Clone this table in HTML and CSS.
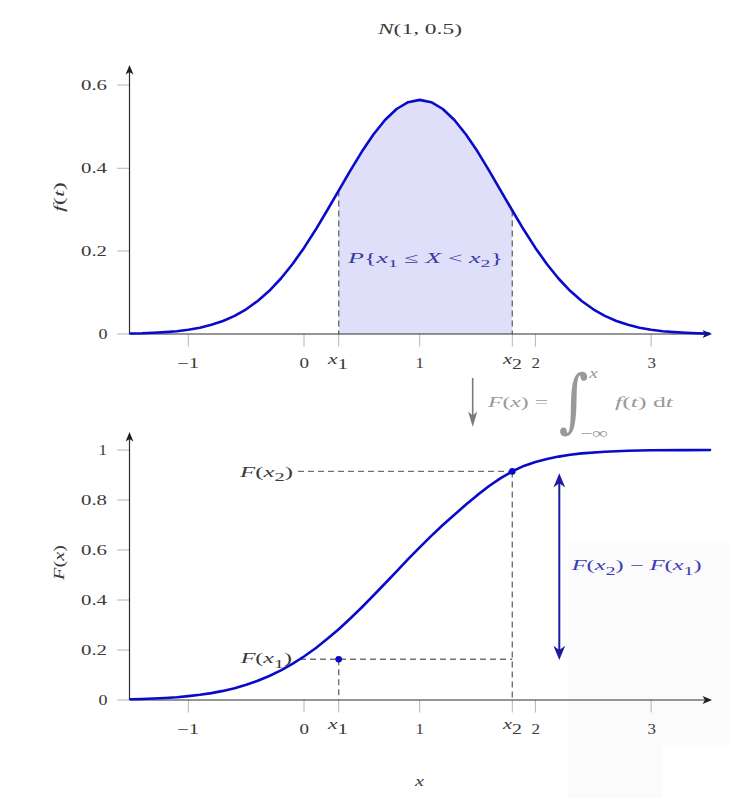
FILE: index.html
```html
<!DOCTYPE html>
<html lang="en">
<head>
<meta charset="utf-8">
<title>N(1, 0.5)</title>
<link rel="stylesheet" href="styles.css">
</head>
<body>
<svg class="chart" width="729" height="798" viewBox="0 0 729 798" xmlns="http://www.w3.org/2000/svg">
  <!-- faint background watermark -->
  <rect class="wm" x="568" y="543" width="161" height="255"/>
  <rect class="wm-in" x="662" y="745" width="67" height="53"/>

  <!-- title -->
  <text class="lbl" x="378" y="33.5" textLength="84" lengthAdjust="spacingAndGlyphs"><tspan class="it">N</tspan>(1, 0.5)</text>

  <!-- ============ TOP PLOT (density) ============ -->
  <polygon class="shade" points="338.7,334 338.7,190.6 350.3,170.6 361.9,151.6 373.4,134.5 385.0,120.0 396.6,109.0 408.1,102.2 419.7,99.9 431.3,102.2 442.8,109.0 454.4,120.0 466.0,134.5 477.6,151.6 489.1,170.6 500.7,190.6 512.3,210.5 512.3,334"/>

  <g class="tick">
    <line x1="117" y1="85" x2="129.5" y2="85"/>
    <line x1="117" y1="168.3" x2="129.5" y2="168.3"/>
    <line x1="117" y1="251" x2="129.5" y2="251"/>
    <line x1="117" y1="334" x2="129.5" y2="334"/>
    <line x1="188.3" y1="334" x2="188.3" y2="346.5"/>
    <line x1="304" y1="334" x2="304" y2="346.5"/>
    <line x1="338.7" y1="334" x2="338.7" y2="346.5"/>
    <line x1="419.7" y1="334" x2="419.7" y2="346.5"/>
    <line x1="512.3" y1="334" x2="512.3" y2="346.5"/>
    <line x1="535.4" y1="334" x2="535.4" y2="346.5"/>
    <line x1="651.1" y1="334" x2="651.1" y2="346.5"/>
  </g>

  <line class="dash" x1="338.7" y1="190.6" x2="338.7" y2="334"/>
  <line class="dash" x1="512.3" y1="210.5" x2="512.3" y2="334"/>

  <line class="axis" x1="129.5" y1="334" x2="129.5" y2="68"/>
  <path class="head" d="M129.5,65 L133.4,74.5 L129.5,72 L125.6,74.5 Z"/>
  <line class="axis" x1="129.5" y1="334" x2="709" y2="334"/>
  <path class="head" d="M712,334 L702.5,330.1 L705,334 L702.5,337.9 Z"/>

  <polyline class="curve" points="130.45,333.5 142.0,333.3 153.6,332.8 165.2,332.1 176.7,331.2 188.3,329.7 199.9,327.7 211.4,324.8 223.0,321.0 234.6,315.9 246.2,309.3 257.7,301.0 269.3,290.8 280.9,278.5 292.4,264.2 304.0,247.9 315.6,229.8 327.1,210.5 338.7,190.6 350.3,170.6 361.9,151.6 373.4,134.5 385.0,120.0 396.6,109.0 408.1,102.2 419.7,99.9 431.3,102.2 442.8,109.0 454.4,120.0 466.0,134.5 477.6,151.6 489.1,170.6 500.7,190.6 512.3,210.5 523.8,229.8 535.4,247.9 547.0,264.2 558.5,278.5 570.1,290.8 581.7,301.0 593.3,309.3 604.8,315.9 616.4,321.0 628.0,324.8 639.5,327.7 651.1,329.7 662.7,331.2 674.2,332.1 685.8,332.8 697.4,333.3 709.0,333.6"/>

  <text class="lbl" x="81" y="90" textLength="26" lengthAdjust="spacingAndGlyphs">0.6</text>
  <text class="lbl" x="81" y="173.3" textLength="26" lengthAdjust="spacingAndGlyphs">0.4</text>
  <text class="lbl" x="81" y="256" textLength="26" lengthAdjust="spacingAndGlyphs">0.2</text>
  <text class="lbl" x="98.5" y="339" textLength="9" lengthAdjust="spacingAndGlyphs">0</text>

  <text class="lbl" x="177" y="368" textLength="22" lengthAdjust="spacingAndGlyphs">−1</text>
  <text class="lbl" x="299.5" y="368" textLength="9.5" lengthAdjust="spacingAndGlyphs">0</text>
  <text class="lbl" x="328" y="363.5" textLength="20" lengthAdjust="spacingAndGlyphs"><tspan class="it">x</tspan><tspan class="subb" dy="5.5">1</tspan></text>
  <text class="lbl" x="415.5" y="368" textLength="8.5" lengthAdjust="spacingAndGlyphs">1</text>
  <text class="lbl" x="503" y="363.5" textLength="19" lengthAdjust="spacingAndGlyphs"><tspan class="it">x</tspan><tspan class="subb" dy="5.5">2</tspan></text>
  <text class="lbl" x="531.5" y="368" textLength="8.5" lengthAdjust="spacingAndGlyphs">2</text>
  <text class="lbl" x="647.5" y="368" textLength="8.5" lengthAdjust="spacingAndGlyphs">3</text>

  <text class="lbl" transform="translate(64,212) rotate(-90)" x="0" y="0" textLength="30" lengthAdjust="spacingAndGlyphs"><tspan class="it">f</tspan>(<tspan class="it">t</tspan>)</text>

  <text class="lbl plab" x="348" y="263.3" textLength="155" lengthAdjust="spacingAndGlyphs"><tspan class="it">P</tspan>{<tspan class="it">x</tspan><tspan class="sub" dy="3.5">1</tspan><tspan dy="-3.5"> ≤ </tspan><tspan class="it">X</tspan> &lt; <tspan class="it">x</tspan><tspan class="sub" dy="3.5">2</tspan><tspan dy="-3.5">}</tspan></text>

  <!-- ============ CONNECTOR ============ -->
  <line class="garrow" x1="472.7" y1="378" x2="472.7" y2="418"/>
  <path class="ghead" d="M472.7,427 L477.2,411.5 L472.7,415.5 L468.2,411.5 Z"/>
  <text class="lbl gray" x="488" y="406.5" textLength="60" lengthAdjust="spacingAndGlyphs"><tspan class="it">F</tspan>(<tspan class="it">x</tspan>) =</text>
  <text class="gray integral" x="0" y="0" transform="translate(559,424) scale(0.95,1.15)">∫</text>
  <text class="lbl gray mid it" x="589" y="378" textLength="9" lengthAdjust="spacingAndGlyphs">x</text>
  <text class="lbl gray" x="580" y="438" textLength="28" lengthAdjust="spacingAndGlyphs">−∞</text>
  <text class="lbl gray" x="615" y="406.5" textLength="58" lengthAdjust="spacingAndGlyphs"><tspan class="it">f</tspan>(<tspan class="it">t</tspan>) d<tspan class="it">t</tspan></text>

  <!-- ============ BOTTOM PLOT (CDF) ============ -->
  <g class="tick">
    <line x1="117" y1="450" x2="129.5" y2="450"/>
    <line x1="117" y1="500" x2="129.5" y2="500"/>
    <line x1="117" y1="550" x2="129.5" y2="550"/>
    <line x1="117" y1="600" x2="129.5" y2="600"/>
    <line x1="117" y1="650" x2="129.5" y2="650"/>
    <line x1="117" y1="700" x2="129.5" y2="700"/>
    <line x1="188.3" y1="700" x2="188.3" y2="712.5"/>
    <line x1="304" y1="700" x2="304" y2="712.5"/>
    <line x1="338.7" y1="700" x2="338.7" y2="712.5"/>
    <line x1="419.7" y1="700" x2="419.7" y2="712.5"/>
    <line x1="512.3" y1="700" x2="512.3" y2="712.5"/>
    <line x1="535.4" y1="700" x2="535.4" y2="712.5"/>
    <line x1="651.1" y1="700" x2="651.1" y2="712.5"/>
  </g>

  <line class="dash" x1="298" y1="471.4" x2="512.3" y2="471.4"/>
  <line class="dash" x1="512.3" y1="471.4" x2="512.3" y2="700"/>
  <line class="dash" x1="300" y1="659.3" x2="512.3" y2="659.3"/>
  <line class="dash" x1="338.7" y1="659.3" x2="338.7" y2="700"/>

  <line class="axis" x1="129.5" y1="700" x2="129.5" y2="435"/>
  <path class="head" d="M129.5,432 L133.4,441.5 L129.5,439 L125.6,441.5 Z"/>
  <line class="axis" x1="129.5" y1="700" x2="709" y2="700"/>
  <path class="head" d="M712,700 L702.5,696.1 L705,700 L702.5,703.9 Z"/>

  <polyline class="curve" points="130.45,699.3 142.0,699.0 153.6,698.55 165.2,698.0 176.7,697.2 188.3,696.1 199.9,694.8 211.4,693.1 223.0,690.9 234.6,688.2 246.2,684.8 257.7,680.8 269.3,676.0 280.9,670.4 292.4,663.9 304,656.5 315.6,648.3 327.1,639.1 338.7,629.2 350.3,618.5 361.9,607.2 373.4,595.5 385.0,583.5 396.6,571.4 408.1,559.2 419.7,547.4 431.3,535.9 442.8,525.0 454.4,514.8 466.0,504.6 477.6,494.9 489.1,486.0 500.7,478.1 512.3,471.4 523.8,465.9 535.4,461.9 547.0,458.9 558.5,456.6 570.1,454.8 581.7,453.4 604.8,451.7 628.0,450.8 651.1,450.3 685.8,450.1 710,450"/>

  <circle class="dot" cx="338.7" cy="659.3" r="3.3"/>
  <circle class="dot" cx="512.3" cy="471.4" r="3.3"/>

  <line class="barrow" x1="559.3" y1="482" x2="559.3" y2="651"/>
  <path class="bhead" d="M559.3,473.3 L565.2,487.5 L559.3,483.2 L553.4,487.5 Z"/>
  <path class="bhead" d="M559.3,660 L565.2,645.8 L559.3,650.1 L553.4,645.8 Z"/>
  <text class="lbl blab" x="571.7" y="570" textLength="130" lengthAdjust="spacingAndGlyphs"><tspan class="it">F</tspan>(<tspan class="it">x</tspan><tspan class="sub2" dy="4.5">2</tspan><tspan dy="-4.5">) − </tspan><tspan class="it">F</tspan>(<tspan class="it">x</tspan><tspan class="sub2" dy="4.5">1</tspan><tspan dy="-4.5">)</tspan></text>

  <text class="lbl" x="240" y="476.5" textLength="53" lengthAdjust="spacingAndGlyphs"><tspan class="it">F</tspan>(<tspan class="it">x</tspan><tspan class="sub2" dy="4.5">2</tspan><tspan dy="-4.5">)</tspan></text>
  <text class="lbl" x="240.7" y="663.3" textLength="51.3" lengthAdjust="spacingAndGlyphs"><tspan class="it">F</tspan>(<tspan class="it">x</tspan><tspan class="sub2" dy="4.5">1</tspan><tspan dy="-4.5">)</tspan></text>

  <text class="lbl" x="98.5" y="455" textLength="8.5" lengthAdjust="spacingAndGlyphs">1</text>
  <text class="lbl" x="81" y="505" textLength="26" lengthAdjust="spacingAndGlyphs">0.8</text>
  <text class="lbl" x="81" y="555" textLength="26" lengthAdjust="spacingAndGlyphs">0.6</text>
  <text class="lbl" x="81" y="605" textLength="26" lengthAdjust="spacingAndGlyphs">0.4</text>
  <text class="lbl" x="81" y="655" textLength="26" lengthAdjust="spacingAndGlyphs">0.2</text>
  <text class="lbl" x="98.5" y="705" textLength="9" lengthAdjust="spacingAndGlyphs">0</text>

  <text class="lbl" x="177" y="733.5" textLength="22" lengthAdjust="spacingAndGlyphs">−1</text>
  <text class="lbl" x="299.5" y="733.5" textLength="9.5" lengthAdjust="spacingAndGlyphs">0</text>
  <text class="lbl" x="328" y="728.5" textLength="20" lengthAdjust="spacingAndGlyphs"><tspan class="it">x</tspan><tspan class="subb" dy="5.5">1</tspan></text>
  <text class="lbl" x="415.5" y="733.5" textLength="8.5" lengthAdjust="spacingAndGlyphs">1</text>
  <text class="lbl" x="503" y="728.5" textLength="19" lengthAdjust="spacingAndGlyphs"><tspan class="it">x</tspan><tspan class="subb" dy="5.5">2</tspan></text>
  <text class="lbl" x="531.5" y="733.5" textLength="8.5" lengthAdjust="spacingAndGlyphs">2</text>
  <text class="lbl" x="647.5" y="733.5" textLength="8.5" lengthAdjust="spacingAndGlyphs">3</text>

  <text class="lbl it" x="415" y="786" textLength="9" lengthAdjust="spacingAndGlyphs">x</text>
  <text class="lbl" transform="translate(64,580) rotate(-90)" x="0" y="0" textLength="35" lengthAdjust="spacingAndGlyphs"><tspan class="it">F</tspan>(<tspan class="it">x</tspan>)</text>
</svg>
</body>
</html>
```

FILE: styles.css
```css
html, body {
  margin: 0;
  padding: 0;
  background: #ffffff;
}

.chart {
  display: block;
  width: 729px;
  height: 798px;
}

.wm { fill: #fbfbfb; }
.wm-in { fill: #ffffff; }

.lbl {
  font-family: "Liberation Serif", "Times New Roman", serif;
  font-size: 14.5px;
  fill: #3a3a3a;
}
.it { font-style: italic; }
.sub { font-size: 11px; font-style: normal; }
.sub2 { font-size: 12px; font-style: normal; }
.subb { font-size: 14px; font-style: normal; }
.mid { font-size: 14px; }

.plab { fill: #3a3aa4; }
.blab { fill: #3c3cb8; }
.gray { fill: #999999; }
.integral {
  font-family: "DejaVu Serif", "Liberation Serif", serif;
  font-size: 60px;
}

.shade { fill: #dfdff9; stroke: none; }

.tick line {
  stroke: #b4b4b4;
  stroke-width: 1;
}

.axis {
  stroke: #2e2e2e;
  stroke-width: 1.2;
}
.head { fill: #1e1e1e; }

.dash {
  stroke: #707070;
  stroke-width: 1.4;
  stroke-dasharray: 6 4;
}

.curve {
  fill: none;
  stroke: #0a0acb;
  stroke-width: 2.6;
  stroke-linejoin: round;
  stroke-linecap: round;
}

.dot { fill: #0a0acb; }

.barrow {
  stroke: #1b1ba0;
  stroke-width: 2;
}
.bhead { fill: #1b1ba0; }

.garrow {
  stroke: #7a7a7a;
  stroke-width: 1.6;
}
.ghead { fill: #7a7a7a; }
```
